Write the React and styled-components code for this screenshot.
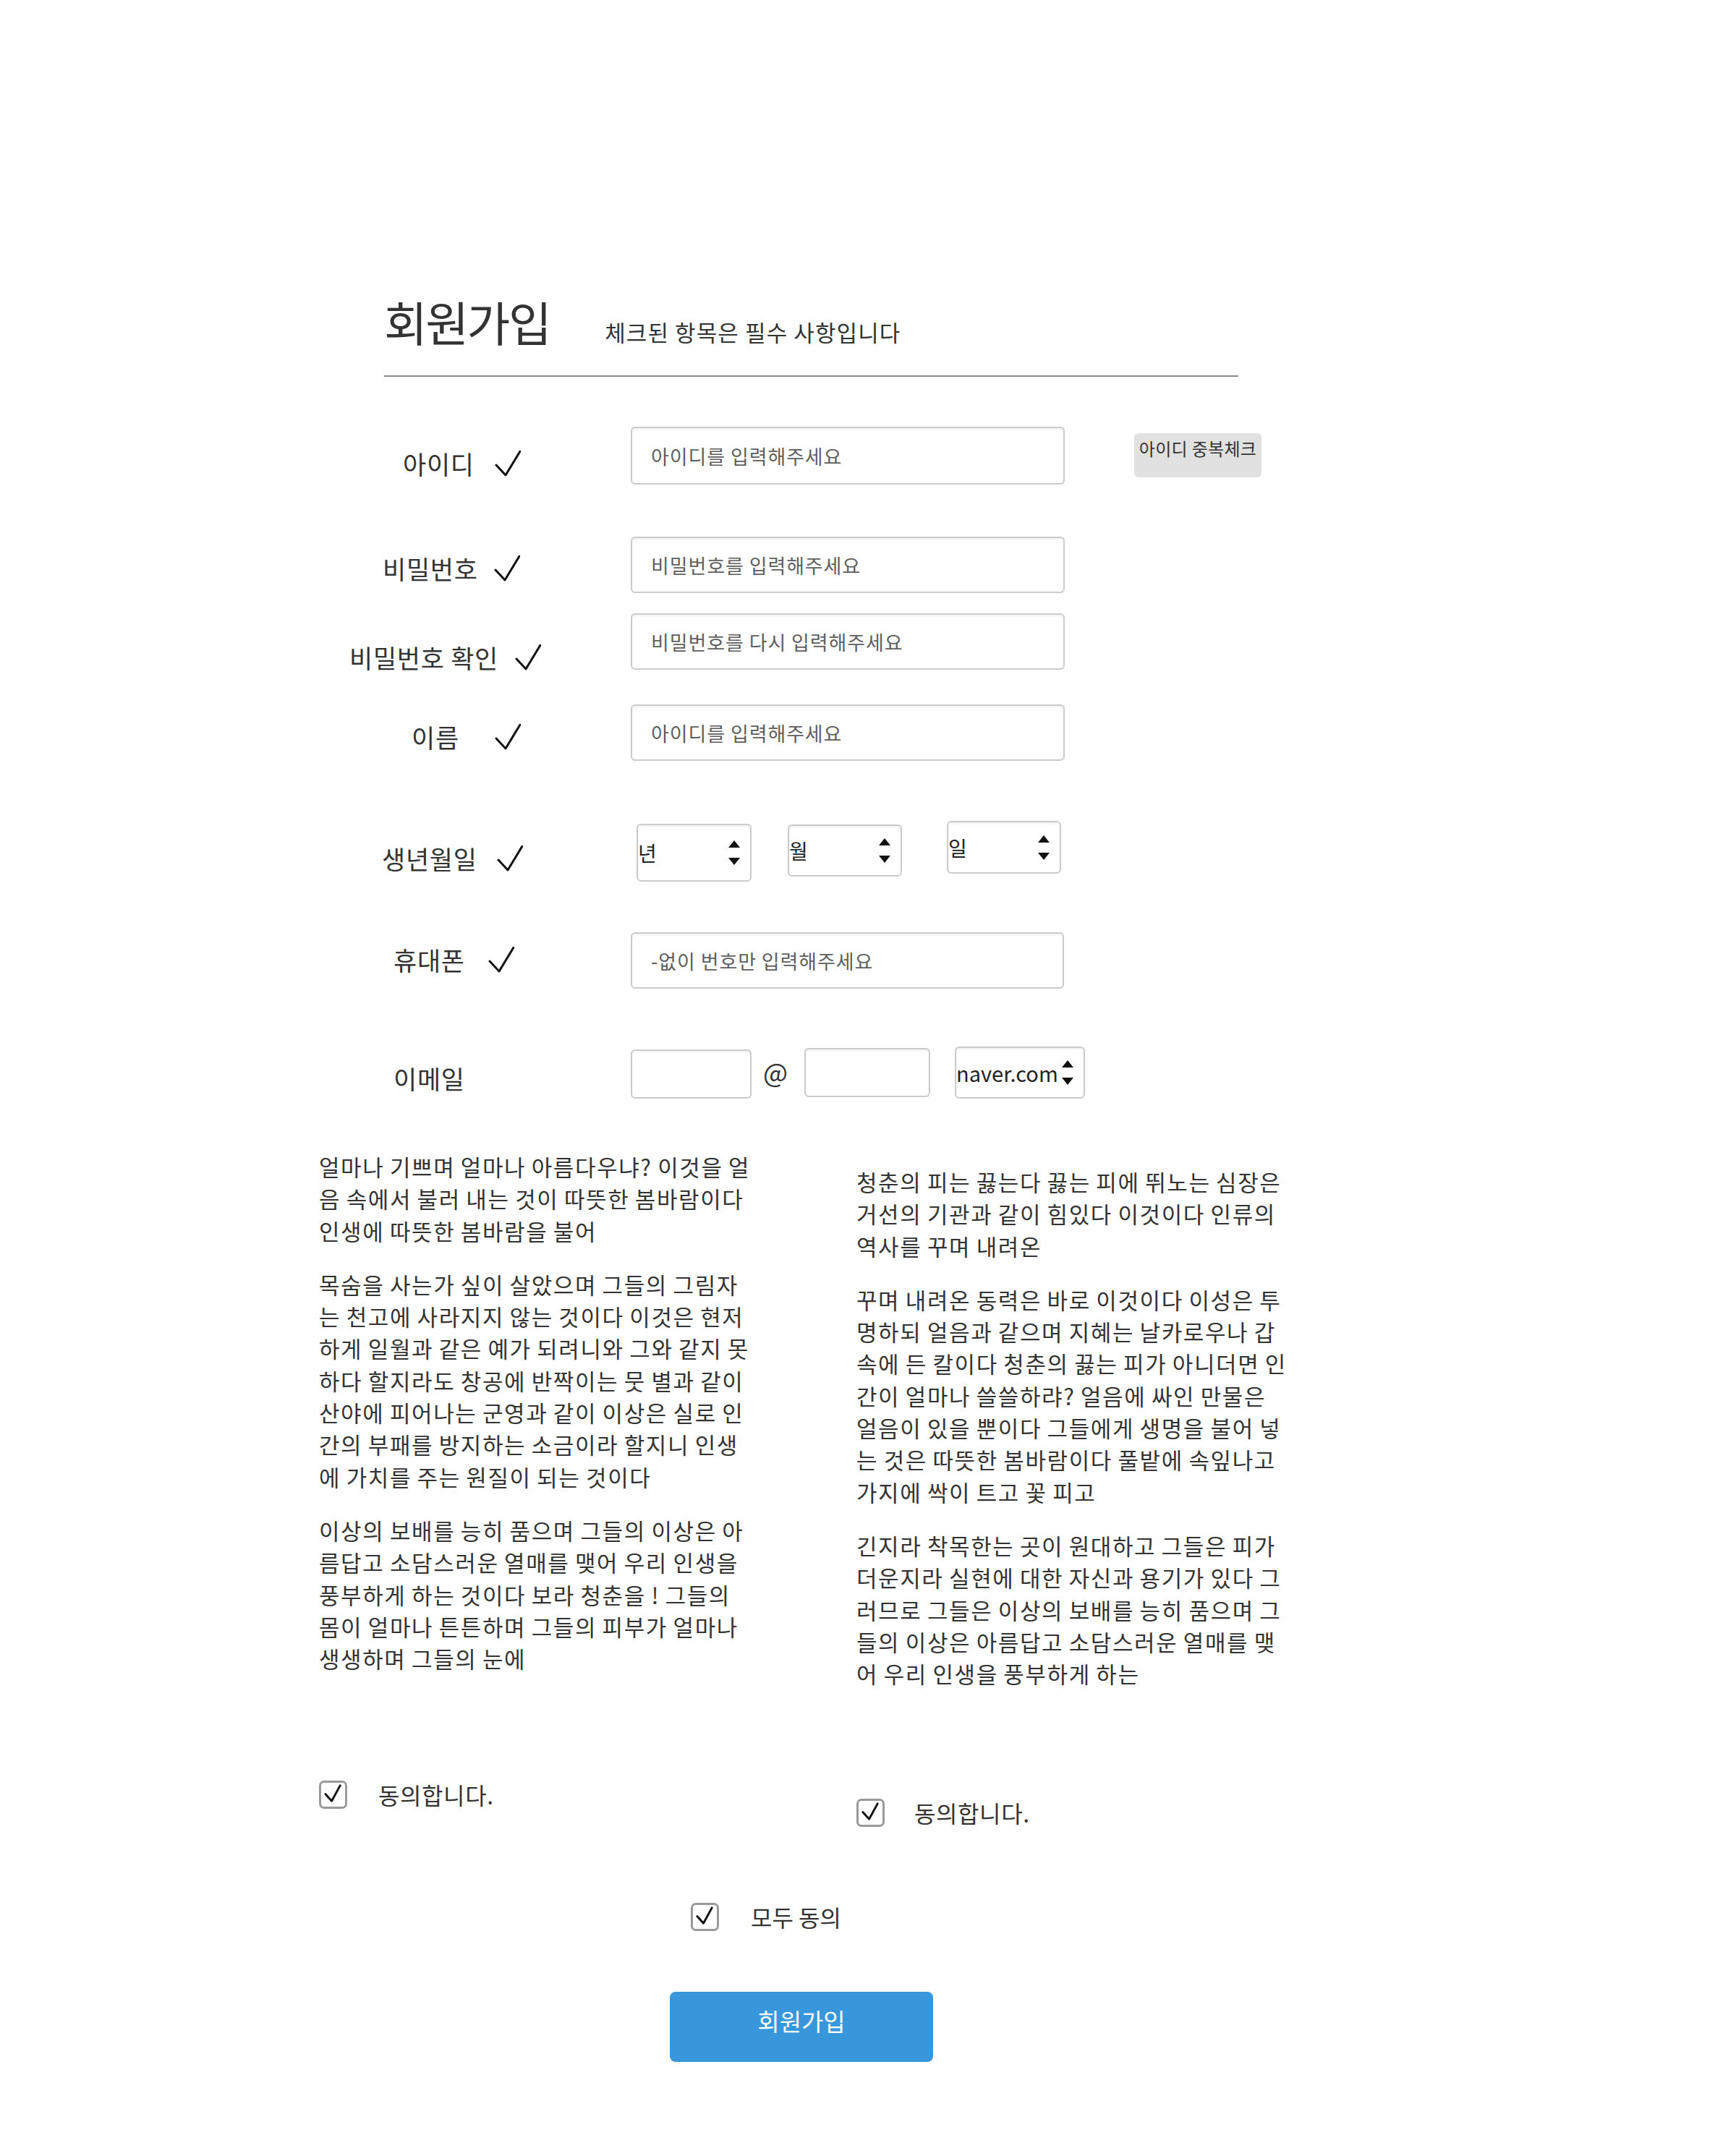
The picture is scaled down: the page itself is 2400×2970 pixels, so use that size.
import React from "react";
import styled, { createGlobalStyle } from "styled-components";

const GlobalStyle = createGlobalStyle`
  html, body { margin: 0; padding: 0; background: #fff; }
  body {
    font-family: "Noto Sans CJK KR", "Noto Sans", sans-serif;
    color: #333;
  }
  *, *::before, *::after { box-sizing: border-box; }
`;

const FONT = `"Noto Sans CJK KR", "Noto Sans", sans-serif`;

const Page = styled.div`
  width: 2400px;
  min-height: 2970px;
  padding: 408px 0 0 441px;
`;

const Header = styled.header`
  margin-left: 90px;
  width: 1181px;
  display: flex;
  align-items: baseline;
  padding-bottom: 38px;
  border-bottom: 2px solid #8a8a8a;
`;

const Title = styled.h1`
  margin: 0;
  font-size: 65px;
  line-height: 72px;
  font-weight: 400;
  letter-spacing: -2.5px;
  color: #333;
`;

const Subtitle = styled.span`
  margin-left: 76px;
  font-size: 31px;
  letter-spacing: 1.1px;
  color: #333;
`;

const Form = styled.form`
  display: flex;
  flex-direction: column;
`;

const Row = styled.div`
  display: flex;
  align-items: flex-start;
  margin-top: ${(p) => p.$mt}px;
`;

const LabelCell = styled.div`
  display: flex;
  width: 431px;
  flex: none;
  padding-left: ${(p) => p.$left}px;
  padding-top: ${(p) => p.$top}px;
`;

const Label = styled.label`
  display: flex;
  align-items: center;
  height: 34px;
  font-size: 35px;
  line-height: 34px;
  letter-spacing: 0.7px;
  color: #333;
  white-space: nowrap;
`;

const CheckMark = styled.svg`
  width: 36px;
  height: 36px;
  flex: none;
  margin-left: ${(p) => p.$gap}px;
`;

const Fields = styled.div`
  display: flex;
  align-items: flex-start;
`;

const TextInput = styled.input`
  display: block;
  width: ${(p) => p.$w}px;
  height: ${(p) => p.$h}px;
  margin-top: ${(p) => p.$mt || 0}px;
  padding: 0 26px;
  border: 2px solid #cbcbcb;
  border-radius: 6px;
  box-shadow: inset 0 2px 3px rgba(0, 0, 0, 0.06);
  background: #fff;
  font-family: ${FONT};
  font-size: 27px;
  letter-spacing: 0.9px;
  color: #333;
  outline: none;
  &::placeholder { color: #5e5e5e; }
`;

const GrayButton = styled.button`
  width: 176px;
  height: 61px;
  margin-left: 96px;
  margin-top: 9px;
  padding: 8px 4px 27px;
  border: none;
  border-radius: 6px;
  background: #e1e1e1;
  font-family: ${FONT};
  font-size: 24px;
  line-height: 26px;
  letter-spacing: 0.3px;
  color: #333;
  text-align: center;
  white-space: nowrap;
`;

const SelectBox = styled.div`
  display: flex;
  align-items: center;
  width: ${(p) => p.$w}px;
  height: ${(p) => p.$h}px;
  margin-left: ${(p) => p.$ml || 0}px;
  margin-top: ${(p) => p.$mt || 0}px;
  border: 2px solid #cbcbcb;
  border-radius: 6px;
  box-shadow: inset 0 2px 3px rgba(0, 0, 0, 0.06);
  background: #fff;
  padding-right: 14px;
`;

const Select = styled.select`
  appearance: none;
  -webkit-appearance: none;
  flex: 1;
  min-width: 0;
  border: none;
  background: transparent;
  padding: 0;
  font-family: ${FONT};
  font-size: ${(p) => p.$fs || 28}px;
  color: #222;
  outline: none;
`;

const Arrows = styled.svg`
  width: 16px;
  height: 36px;
  flex: none;
`;

const At = styled.span`
  margin: 4px 23px 0 16px;
  font-size: 36px;
  line-height: 60px;
  color: #333;
`;

const Terms = styled.section`
  display: grid;
  grid-template-columns: 600px 600px;
  column-gap: 143px;
  margin-top: 72px;
`;

const Column = styled.div`
  padding-top: ${(p) => p.$offset}px;
`;

const Para = styled.p`
  margin: 0;
  font-size: 31px;
  line-height: 44.3px;
  letter-spacing: 1.6px;
  word-spacing: -1px;
  color: #333;
  white-space: nowrap;
  & + & { margin-top: 30px; }
`;

const Line = styled.span`
  display: block;
`;

const AgreeRow = styled.div`
  display: flex;
  align-items: center;
  margin-top: ${(p) => p.$mt}px;
  margin-left: ${(p) => p.$ml || 0}px;
`;

const Box = styled.span`
  display: inline-flex;
  align-items: center;
  justify-content: center;
  width: 39px;
  height: 39px;
  flex: none;
  border: 3px solid #999;
  border-radius: 7px;
  background: #fff;
`;

const AgreeText = styled.span`
  margin-left: ${(p) => p.$gap}px;
  font-size: 32px;
  line-height: 40px;
  letter-spacing: ${(p) => p.$ls || 0}px;
  color: #333;
`;

const Submit = styled.button`
  display: block;
  width: 364px;
  height: 97px;
  margin: 84px 0 0 485px;
  padding: 0 0 16px;
  border: none;
  border-radius: 8px;
  background: #3897db;
  color: #fff;
  font-family: ${FONT};
  font-size: 33px;
  line-height: 33px;
  text-align: center;
`;

const Check = ({ gap }) => (
  <CheckMark $gap={gap} viewBox="0 0 36 36" aria-hidden="true">
    <polyline
      points="2,20 15,34 35,1"
      fill="none"
      stroke="#111"
      strokeWidth="3"
      strokeLinecap="round"
      strokeLinejoin="round"
    />
  </CheckMark>
);

const UpDown = () => (
  <Arrows viewBox="0 0 16 36" aria-hidden="true">
    <polygon points="0,11 8,1 16,11" fill="#111" />
    <polygon points="0,25 16,25 8,35" fill="#111" />
  </Arrows>
);

const CheckBox = () => (
  <Box role="checkbox" aria-checked="true">
    <svg width="33" height="33" viewBox="0 0 34 34" aria-hidden="true">
      <polyline
        points="6,16 15,26 27,4"
        fill="none"
        stroke="#111"
        strokeWidth="3"
        strokeLinecap="round"
        strokeLinejoin="round"
      />
    </svg>
  </Box>
);

const col1 = [
  [
    "얼마나 기쁘며 얼마나 아름다우냐? 이것을 얼",
    "음 속에서 불러 내는 것이 따뜻한 봄바람이다",
    "인생에 따뜻한 봄바람을 불어",
  ],
  [
    "목숨을 사는가 싶이 살았으며 그들의 그림자",
    "는 천고에 사라지지 않는 것이다 이것은 현저",
    "하게 일월과 같은 예가 되려니와 그와 같지 못",
    "하다 할지라도 창공에 반짝이는 뭇 별과 같이",
    "산야에 피어나는 군영과 같이 이상은 실로 인",
    "간의 부패를 방지하는 소금이라 할지니 인생",
    "에 가치를 주는 원질이 되는 것이다",
  ],
  [
    "이상의 보배를 능히 품으며 그들의 이상은 아",
    "름답고 소담스러운 열매를 맺어 우리 인생을",
    "풍부하게 하는 것이다 보라 청춘을 ! 그들의",
    "몸이 얼마나 튼튼하며 그들의 피부가 얼마나",
    "생생하며 그들의 눈에",
  ],
];

const col2 = [
  [
    "청춘의 피는 끓는다 끓는 피에 뛰노는 심장은",
    "거선의 기관과 같이 힘있다 이것이다 인류의",
    "역사를 꾸며 내려온",
  ],
  [
    "꾸며 내려온 동력은 바로 이것이다 이성은 투",
    "명하되 얼음과 같으며 지혜는 날카로우나 갑",
    "속에 든 칼이다 청춘의 끓는 피가 아니더면 인",
    "간이 얼마나 쓸쓸하랴? 얼음에 싸인 만물은",
    "얼음이 있을 뿐이다 그들에게 생명을 불어 넣",
    "는 것은 따뜻한 봄바람이다 풀밭에 속잎나고",
    "가지에 싹이 트고 꽃 피고",
  ],
  [
    "긴지라 착목한는 곳이 원대하고 그들은 피가",
    "더운지라 실현에 대한 자신과 용기가 있다 그",
    "러므로 그들은 이상의 보배를 능히 품으며 그",
    "들의 이상은 아름답고 소담스러운 열매를 맺",
    "어 우리 인생을 풍부하게 하는",
  ],
];

const Paragraphs = ({ data }) =>
  data.map((lines, i) => (
    <Para key={i}>
      {lines.map((l, j) => (
        <Line key={j}>{l}</Line>
      ))}
    </Para>
  ));

export default function App() {
  return (
    <>
      <GlobalStyle />
      <Page>
        <Header>
          <Title>회원가입</Title>
          <Subtitle>체크된 항목은 필수 사항입니다</Subtitle>
        </Header>

        <Form onSubmit={(e) => e.preventDefault()}>
          <Row $mt={69}>
            <LabelCell $left={116} $top={34}>
              <Label>아이디<Check gap={28} /></Label>
            </LabelCell>
            <Fields>
              <TextInput $w={600} $h={80} placeholder="아이디를 입력해주세요" />
              <GrayButton type="button">아이디 중복체크</GrayButton>
            </Fields>
          </Row>

          <Row $mt={72}>
            <LabelCell $left={88} $top={27}>
              <Label>비밀번호<Check gap={22} /></Label>
            </LabelCell>
            <Fields>
              <TextInput $w={600} $h={78} type="password" placeholder="비밀번호를 입력해주세요" />
            </Fields>
          </Row>

          <Row $mt={28}>
            <LabelCell $left={42} $top={44}>
              <Label>비밀번호 확인<Check gap={23} /></Label>
            </LabelCell>
            <Fields>
              <TextInput $w={600} $h={78} type="password" placeholder="비밀번호를 다시 입력해주세요" />
            </Fields>
          </Row>

          <Row $mt={48}>
            <LabelCell $left={128} $top={28}>
              <Label>이름<Check gap={49} /></Label>
            </LabelCell>
            <Fields>
              <TextInput $w={600} $h={78} placeholder="아이디를 입력해주세요" />
            </Fields>
          </Row>

          <Row $mt={83}>
            <LabelCell $left={87} $top={35}>
              <Label>생년월일<Check gap={27} /></Label>
            </LabelCell>
            <Fields>
              <SelectBox $w={159} $h={80} $ml={8} $mt={4}>
                <Select defaultValue="년"><option>년</option></Select>
                <UpDown />
              </SelectBox>
              <SelectBox $w={158} $h={72} $ml={50} $mt={5}>
                <Select defaultValue="월"><option>월</option></Select>
                <UpDown />
              </SelectBox>
              <SelectBox $w={158} $h={73} $ml={62}>
                <Select defaultValue="일"><option>일</option></Select>
                <UpDown />
              </SelectBox>
            </Fields>
          </Row>

          <Row $mt={70}>
            <LabelCell $left={103} $top={21}>
              <Label>휴대폰<Check gap={32} /></Label>
            </LabelCell>
            <Fields>
              <TextInput $w={599} $h={78} placeholder="-없이 번호만 입력해주세요" />
            </Fields>
          </Row>

          <Row $mt={80}>
            <LabelCell $left={103} $top={27}>
              <Label>이메일</Label>
            </LabelCell>
            <Fields>
              <TextInput $w={167} $h={68} $mt={4} />
              <At>@</At>
              <TextInput $w={174} $h={68} $mt={2} />
              <SelectBox $w={180} $h={72} $ml={34}>
                <Select $fs={29} defaultValue="naver.com"><option>naver.com</option></Select>
                <UpDown />
              </SelectBox>
            </Fields>
          </Row>
        </Form>

        <Terms>
          <Column $offset={0}>
            <Paragraphs data={col1} />
            <AgreeRow $mt={146}>
              <CheckBox />
              <AgreeText $gap={43} $ls={0.6}>동의합니다.</AgreeText>
            </AgreeRow>
          </Column>
          <Column $offset={21}>
            <Paragraphs data={col2} />
            <AgreeRow $mt={150}>
              <CheckBox />
              <AgreeText $gap={41} $ls={0.6}>동의합니다.</AgreeText>
            </AgreeRow>
          </Column>
        </Terms>

        <AgreeRow $mt={104} $ml={514}>
          <CheckBox />
          <AgreeText $gap={44}>모두 동의</AgreeText>
        </AgreeRow>

        <Submit type="submit">회원가입</Submit>
      </Page>
    </>
  );
}
